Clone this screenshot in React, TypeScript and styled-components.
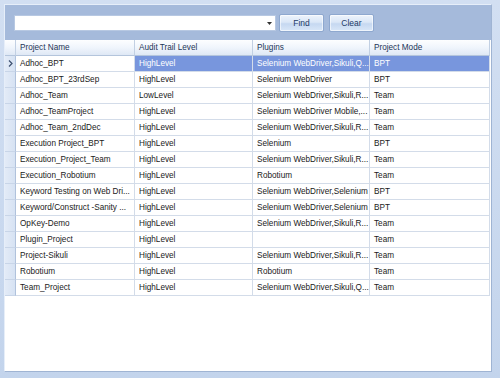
import React from "react";
import styled, { createGlobalStyle } from "styled-components";

const FONT = `"Liberation Sans", Arial, sans-serif`;

const Global = createGlobalStyle`
  html, body { margin: 0; padding: 0; }
  body {
    width: 500px; height: 378px; overflow: hidden;
    background: #c3d4ec;
    font-family: ${FONT};
  }
`;

const Frame = styled.div`
  box-sizing: border-box;
  width: 500px;
  height: 378px;
  padding: 4px 8px 6px 4px;
  background: linear-gradient(#d2dff2, #c3d4ec);
  display: flex;
`;

const Inner = styled.div`
  flex: 1;
  display: flex;
  flex-direction: column;
  border-left: 1px solid #e6eef9;
  border-top: 1px solid #e6eef9;
  border-right: 1px solid #9fb4d3;
  border-bottom: 1px solid #9fb4d3;
`;

const SearchBar = styled.div`
  height: 35px;
  box-sizing: border-box;
  background: #a5badb;
  display: flex;
  align-items: center;
  padding: 1px 0 0 9px;
  gap: 3px;
`;

const Combo = styled.div`
  box-sizing: border-box;
  width: 262px;
  height: 16px;
  background: #fff;
  border: 1px solid #b7c8e2;
  display: flex;
  justify-content: flex-end;
  align-items: center;
  padding-right: 3px;
`;

const Button = styled.button<{ $gap?: number }>`
  box-sizing: border-box;
  width: 45px;
  height: 18px;
  margin-left: ${(p) => p.$gap ?? 0}px;
  border: 1px solid #8ea8cf;
  border-radius: 2px;
  background: linear-gradient(#eef4fc 0%, #dbe7f7 45%, #c6d8f1 55%, #d9e7f8 100%);
  box-shadow: inset 0 0 0 1px rgba(255,255,255,0.6);
  color: #1e3a66;
  font-family: ${FONT};
  font-size: 8.5px;
  padding: 0;
  line-height: 16px;
`;

const Grid = styled.div`
  flex: 1;
  background: #fff;
  display: flex;
  flex-direction: column;
`;

const Row = styled.div`
  display: grid;
  grid-template-columns: 11px 119px 118px 117px 120px;
  height: 16px;
`;

const HeadCell = styled.div`
  box-sizing: border-box;
  height: 16px;
  padding: 0 4px;
  line-height: 15px;
  font-size: 8.2px;
  color: #1d3557;
  background: linear-gradient(#fdfeff 0%, #f0f5fc 50%, #dfe8f5 100%);
  border-right: 1px solid #c2d0e3;
  border-bottom: 1px solid #b4c5dc;
  white-space: nowrap;
  overflow: hidden;
`;

const RowHead = styled.div`
  box-sizing: border-box;
  height: 16px;
  background: linear-gradient(90deg, #e3ebf7, #d6e2f3);
  border-right: 1px solid #b0c2dc;
  border-bottom: 1px solid #c8d5e8;
  display: flex;
  align-items: center;
  justify-content: center;
`;

const Cell = styled.div<{ $sel?: boolean }>`
  box-sizing: border-box;
  height: 16px;
  padding: 0 4px;
  line-height: 15px;
  font-size: 8.2px;
  color: ${(p) => (p.$sel ? "#ffffff" : "#1a1a1a")};
  background: ${(p) => (p.$sel ? "#7896dd" : "#ffffff")};
  border-right: 1px solid #d3dce9;
  border-bottom: 1px solid #d3dce9;
  white-space: nowrap;
  overflow: hidden;
`;

const rows: [string, string, string, string][] = [
  ["Adhoc_BPT", "HighLevel", "Selenium WebDriver,Sikuli,Q...", "BPT"],
  ["Adhoc_BPT_23rdSep", "HighLevel", "Selenium WebDriver", "BPT"],
  ["Adhoc_Team", "LowLevel", "Selenium WebDriver,Sikuli,R...", "Team"],
  ["Adhoc_TeamProject", "HighLevel", "Selenium WebDriver Mobile,...", "Team"],
  ["Adhoc_Team_2ndDec", "HighLevel", "Selenium WebDriver,Sikuli,R...", "Team"],
  ["Execution Project_BPT", "HighLevel", "Selenium", "BPT"],
  ["Execution_Project_Team", "HighLevel", "Selenium WebDriver,Sikuli,R...", "Team"],
  ["Execution_Robotium", "HighLevel", "Robotium", "Team"],
  ["Keyword Testing on Web Dri...", "HighLevel", "Selenium WebDriver,Selenium", "BPT"],
  ["Keyword/Construct -Sanity ...", "HighLevel", "Selenium WebDriver,Selenium", "BPT"],
  ["OpKey-Demo", "HighLevel", "Selenium WebDriver,Sikuli,R...", "Team"],
  ["Plugin_Project", "HighLevel", "", "Team"],
  ["Project-Sikuli", "HighLevel", "Selenium WebDriver,Sikuli,R...", "Team"],
  ["Robotium", "HighLevel", "Robotium", "Team"],
  ["Team_Project", "HighLevel", "Selenium WebDriver,Sikuli,Q...", "Team"],
];

export default function App() {
  return (
    <>
      <Global />
      <Frame>
        <Inner>
          <SearchBar>
            <Combo>
              <svg width="5" height="3" viewBox="0 0 5 3">
                <path d="M0 0h5L2.5 3z" fill="#333" />
              </svg>
            </Combo>
            <Button>Find</Button>
            <Button $gap={2}>Clear</Button>
          </SearchBar>
          <Grid>
            <Row>
              <HeadCell />
              <HeadCell>Project Name</HeadCell>
              <HeadCell>Audit Trail Level</HeadCell>
              <HeadCell>Plugins</HeadCell>
              <HeadCell>Project Mode</HeadCell>
            </Row>
            {rows.map((r, i) => (
              <Row key={i}>
                <RowHead>
                  {i === 0 && (
                    <svg width="5" height="7" viewBox="0 0 5 7">
                      <path d="M1 0.5L4 3.5L1 6.5" fill="none" stroke="#3c4f6e" strokeWidth="1.2" />
                    </svg>
                  )}
                </RowHead>
                <Cell>{r[0]}</Cell>
                <Cell $sel={i === 0}>{r[1]}</Cell>
                <Cell $sel={i === 0}>{r[2]}</Cell>
                <Cell $sel={i === 0}>{r[3]}</Cell>
              </Row>
            ))}
          </Grid>
        </Inner>
      </Frame>
    </>
  );
}
